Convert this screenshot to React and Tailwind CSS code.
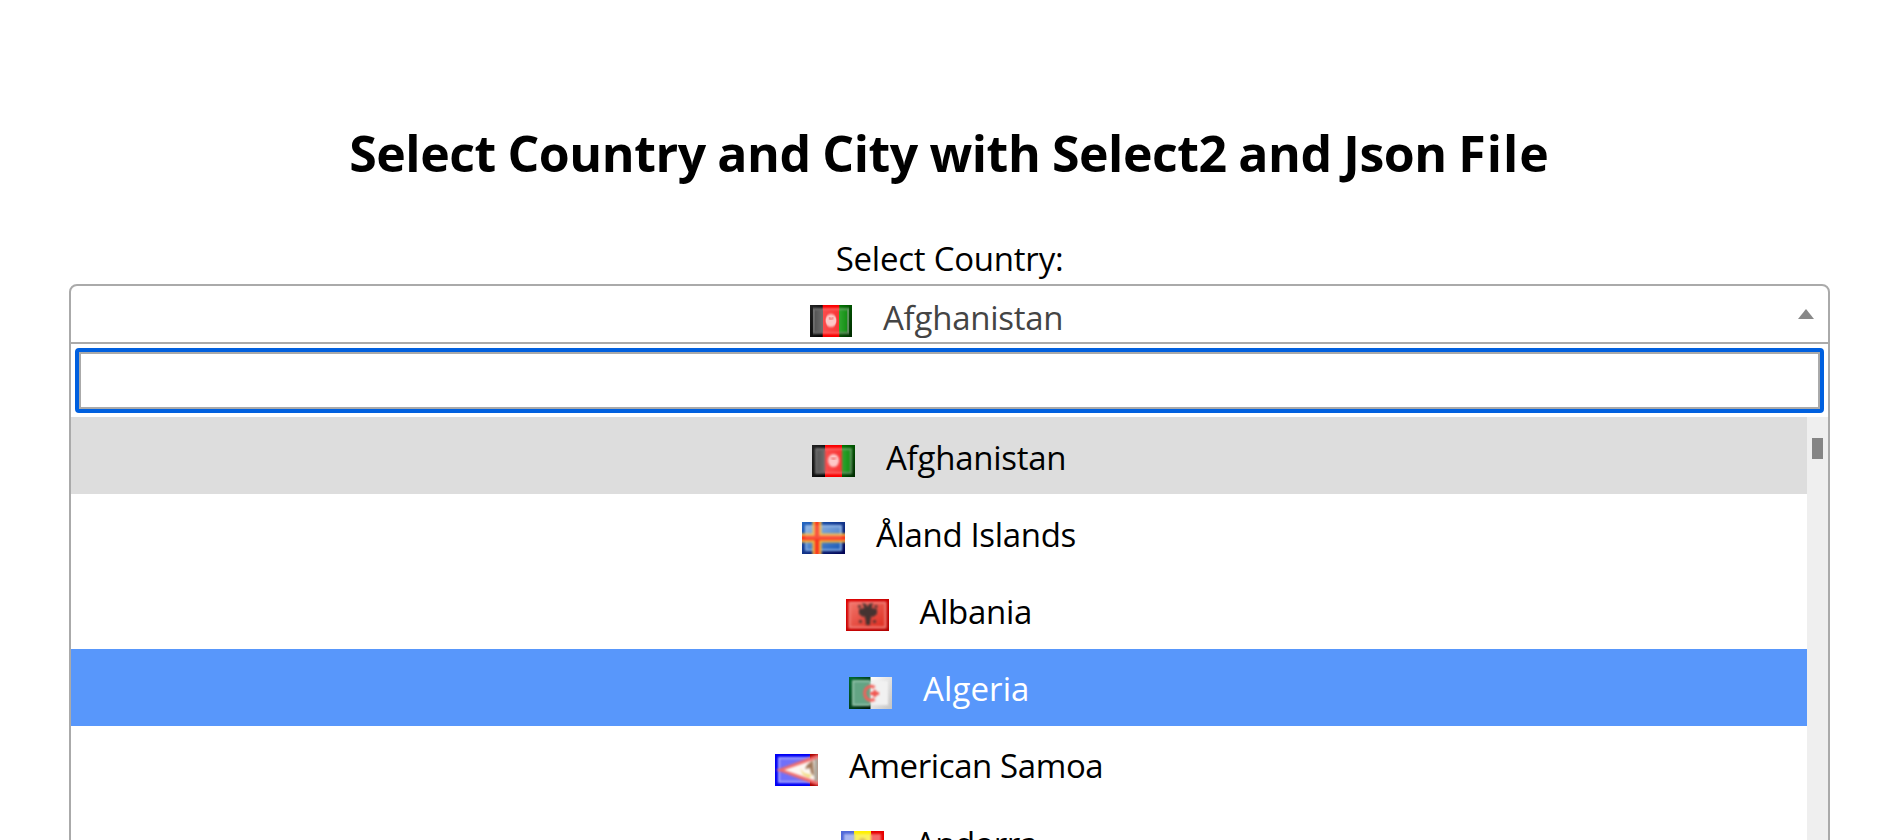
const AfghanFlag = () => (
  <>
    <rect width="14" height="32" fill="url(#afBlack)" />
    <rect x="13" width="18" height="32" fill="#fa0000" />
    <rect x="30" width="13" height="32" fill="url(#afGreen)" />
    <rect x="3" y="3" width="37" height="26" fill="#fff" opacity="0.38" filter="url(#soft)" />
    <rect x="5" y="5" width="33" height="22" fill="url(#afInner)" filter="url(#soft)" />
    <ellipse cx="21.5" cy="15.5" rx="5.6" ry="6.6" fill="#ffd6d6" opacity="0.9" filter="url(#soft)" />
    <path d="M19.5 12.5q2 3 4.5 0" fill="none" stroke="#e66" strokeWidth="1.8" filter="url(#soft)" />
  </>
);

const AlandFlag = () => (
  <>
    <rect width="43" height="32" fill="url(#alBlue)" />
    <rect x="3" y="3" width="37" height="26" fill="#7ea8e0" filter="url(#soft)" />
    <rect x="5" y="5" width="33" height="22" fill="url(#alInner)" filter="url(#soft)" />
    <g filter="url(#soft)">
      <rect x="10.5" y="-2" width="9" height="36" fill="#f6b93c" />
      <rect x="-2" y="11.5" width="47" height="9" fill="#f6b93c" />
      <rect x="12.8" y="-2" width="4.4" height="36" fill="#f8351f" />
      <rect x="-2" y="13.8" width="47" height="4.4" fill="#f8351f" />
    </g>
    <rect x="3" y="3" width="37" height="14" fill="#fff" opacity="0.14" filter="url(#soft)" />
  </>
);

const AlbaniaFlag = () => (
  <>
    <rect width="43" height="32" fill="url(#abRed)" />
    <rect x="2.5" y="2.5" width="38" height="27" fill="#f28078" filter="url(#soft)" />
    <rect x="4.5" y="4.5" width="34" height="23" fill="url(#abInner)" filter="url(#soft)" />
    <g filter="url(#soft)" fill="#33302f">
      <path d="M16 4l4 1 1.500 3L23 5l4-1-1.500 5 5.500 1v5l-4 3-1.500-1-1 4-.5 5h-4l-.5-5-1-4-1.500 1-4-3v-5l5.500-1z" opacity="0.9" />
      <g opacity="0.7">
        <rect x="12" y="6" width="3" height="3" />
        <rect x="28.500" y="6" width="3" height="3" />
        <rect x="13" y="21" width="3" height="3" />
        <rect x="27" y="21" width="3" height="3" />
      </g>
    </g>
  </>
);

const AlgeriaFlag = () => (
  <>
    <rect width="22" height="32" fill="url(#dzGreen)" />
    <rect x="21.5" width="21.5" height="32" fill="url(#dzWhite)" />
    <path d="M3 3h18.500v26H3z" fill="#91c1a8" filter="url(#soft)" />
    <path d="M5 5h16.500v22H5z" fill="#63a484" filter="url(#soft)" />
    <path d="M21.500 4H39v24H21.500z" fill="#f1f1f1" filter="url(#soft)" />
    <g filter="url(#soft)">
      <path d="M25.500 10.500A6.200 7 0 1 0 25.500 22" fill="none" stroke="#f2605a" strokeWidth="3.200" />
      <path d="M21 16.500h9M25.800 13v7" stroke="#f0524c" strokeWidth="2.800" />
    </g>
  </>
);

const SamoaFlag = () => (
  <>
    <rect width="43" height="32" fill="#0000f5" />
    <rect x="3" y="3" width="40" height="26" fill="#a3a3ff" filter="url(#soft)" />
    <rect x="5" y="5" width="38" height="22" fill="#7070fa" filter="url(#soft)" />
    <path d="M35 0h8v32h-8z" fill="#a80000" />
    <g filter="url(#soft)">
      <path d="M44 0L1 16L44 32z" fill="#f06c6c" />
      <path d="M44 4L9 16L44 28z" fill="#fdf7f2" />
      <path d="M38 6l-6 5-2 4 5-1 1 5 3 3z" fill="#a0785a" />
      <path d="M39.500 5h4v22h-4z" fill="#a7a094" />
      <path d="M25 14l4 5 8 2-3 3-6-3z" fill="#f2dc83" />
    </g>
  </>
);

const AndorraFlag = () => (
  <>
    <rect width="14" height="32" fill="#5068d8" />
    <rect x="13" width="17" height="32" fill="#ffef00" />
    <rect x="30" width="13" height="32" fill="#e60000" />
    <g filter="url(#soft)">
      <rect x="3" y="3" width="10.500" height="26" fill="#aab7f0" />
      <rect x="13.500" y="3" width="16.500" height="26" fill="#fbf160" />
      <rect x="30" y="3" width="10" height="26" fill="#f46a6a" />
      <ellipse cx="21.500" cy="14" rx="5" ry="7" fill="#d9bf62" />
    </g>
  </>
);

const Stops = ({ id, from, to, x2 = "1", y2 = "1" }) => (
  <linearGradient id={id} x1="0" y1="0" x2={x2} y2={y2}>
    <stop offset="0" stopColor={from} />
    <stop offset="1" stopColor={to} />
  </linearGradient>
);

const FlagDefs = () => (
  <svg width="0" height="0" className="absolute" aria-hidden="true">
    <defs>
      <filter id="soft" x="-20%" y="-20%" width="140%" height="140%" colorInterpolationFilters="sRGB">
        <feGaussianBlur stdDeviation="0.8" />
      </filter>
      <Stops id="afBlack" from="#222222" to="#000000" />
      <Stops id="afGreen" from="#007800" to="#002800" />
      <linearGradient id="afInner" x1="0" y1="0" x2="1" y2="0">
        <stop offset="0" stopColor="#555555" />
        <stop offset="0.25" stopColor="#6e6e6e" />
        <stop offset="0.25" stopColor="#fb4c4c" />
        <stop offset="0.76" stopColor="#f83434" />
        <stop offset="0.76" stopColor="#2fa52f" />
        <stop offset="1" stopColor="#159015" />
      </linearGradient>
      <Stops id="alBlue" from="#2468c4" to="#000050" />
      <Stops id="alInner" from="#7ea9de" to="#1e5cb8" />
      <Stops id="abRed" from="#e00000" to="#b00000" />
      <Stops id="abInner" from="#f07268" to="#de2e22" />
      <Stops id="dzGreen" from="#006b30" to="#001808" />
      <Stops id="dzWhite" from="#ffffff" to="#c4c4c4" />
    </defs>
  </svg>
);

const Flag = ({ art: Art, className = "" }) => (
  <svg viewBox="0 0 43 32" preserveAspectRatio="none" className={`block shrink-0 overflow-hidden ${className}`}>
    <Art />
  </svg>
);

const countries = [
  { name: "Afghanistan", art: AfghanFlag, row: "bg-[#dddddd]", text: "w-[180px] tracking-[-0.25px]" },
  { name: "Åland Islands", art: AlandFlag, row: "", text: "w-[200px] tracking-[-0.34px]" },
  { name: "Albania", art: AlbaniaFlag, row: "", text: "w-[113px] tracking-[-0.3px]" },
  { name: "Algeria", art: AlgeriaFlag, row: "bg-[#5897fb] text-white", text: "w-[106px] tracking-[0.1px]" },
  { name: "American Samoa", art: SamoaFlag, row: "", text: "w-[254px] tracking-[-0.4px]" },
  { name: "Andorra", art: AndorraFlag, row: "", text: "w-[122px] tracking-[-0.6px]" },
];

export default function App() {
  return (
    <main className="h-[840px] overflow-hidden bg-white pl-[69px] pr-[68px] font-['Open_Sans',sans-serif] text-[33px] text-black">
      <FlagDefs />
      <h1 className="pt-[119px] text-center text-[50px] leading-[68px] font-bold tracking-[-0.43px] [word-spacing:-1px]">
        Select Country and City with Select2 and Json <span className="tracking-[1px]">File</span>
      </h1>
      <div className="mt-[50px] h-[47px] text-center leading-[44px] tracking-[-0.23px]">Select Country:</div>
      <div className="flex h-[60px] justify-center rounded-t-[8px] border-2 border-[#aaaaaa] pt-[10px] pl-[4px]">
        <div className="ml-auto flex gap-[31px]">
          <Flag art={AfghanFlag} className="mt-[9px] h-8 w-[42px]" />
          <span className="w-[180px] leading-[44px] tracking-[-0.25px] whitespace-nowrap text-[#444444]">Afghanistan</span>
        </div>
        <div className="mr-[14px] ml-auto flex w-4 pt-[13px]">
          <svg viewBox="0 0 16 10" className="h-[10px] w-4">
            <path d="M0 10L8 0L16 10z" fill="#888888" />
          </svg>
        </div>
      </div>
      <div className="h-[500px] border-x-2 border-[#aaaaaa]">
        <div className="px-1 pt-1">
          <input className="block h-[65px] w-full rounded-[4px] border-4 border-[#0060df] bg-white shadow-[inset_0_0_0_2px_#aaaaaa] outline-none" />
        </div>
        <div className="mt-1 flex h-[430px] overflow-hidden">
          <ul className="min-w-0 flex-1">
            {countries.map(({ name, art, row, text }) => (
              <li key={name} className={`flex h-[77.2px] justify-center gap-[31px] ${row}`}>
                <Flag art={art} className="mt-[28px] h-8 w-[43px]" />
                <span className={`pt-[18.6px] leading-[44px] whitespace-nowrap ${text}`}>{name}</span>
              </li>
            ))}
          </ul>
          <div className="flex w-[21px] justify-center bg-[#efefef] pt-[21px]">
            <div className="h-[21px] w-[11px] bg-[#858585]" />
          </div>
        </div>
      </div>
    </main>
  );
}
